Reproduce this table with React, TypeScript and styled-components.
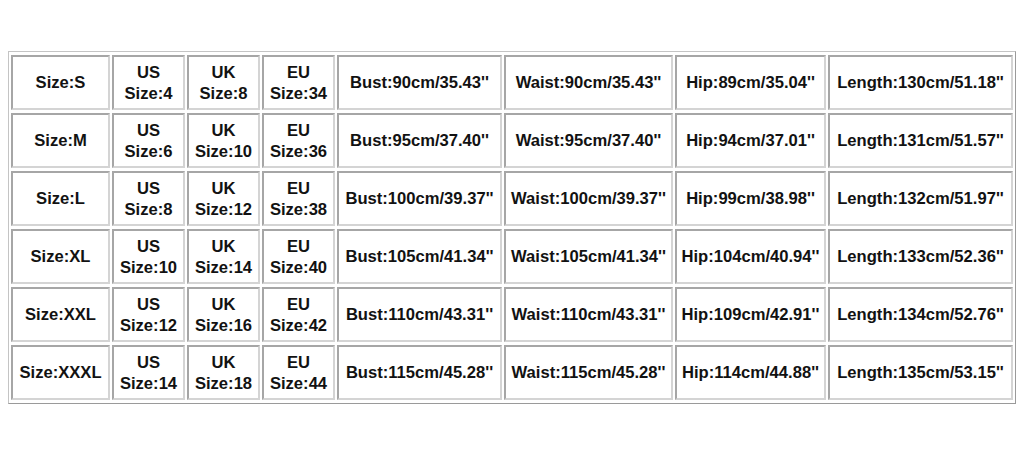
import React from 'react'
import styled, { createGlobalStyle } from 'styled-components'

const GlobalStyle = createGlobalStyle`
  html, body {
    margin: 0;
    padding: 0;
    background: #ffffff;
  }
  body {
    font-family: "Liberation Sans", Arial, sans-serif;
  }
`

const Page = styled.div`
  padding: 51px 8px 0 8px;
  width: 1024px;
  height: 450px;
  box-sizing: border-box;
`

const SizeTable = styled.table`
  width: 1008px;
  border: 1px solid #c4c4c4;
  border-right-color: #9a9a9a;
  border-bottom-color: #9a9a9a;
  border-spacing: 2px 3px;
  table-layout: fixed;
`

const Cell = styled.td<{ $w: number }>`
  width: ${({ $w }) => $w}px;
  height: 55px;
  box-sizing: border-box;
  padding: 0;
  border: 2px solid #a6a6a6;
  border-right-color: #d4d4d4;
  border-bottom-color: #d4d4d4;
  text-align: center;
  vertical-align: middle;
  font-size: 16.6px;
  font-weight: bold;
  line-height: 21px;
  color: #121212;
  white-space: nowrap;
`

const widths = [99, 73, 73, 73, 165, 169, 151, 185]

const rows = [
  ['S', '4', '8', '34', '90cm/35.43', '90cm/35.43', '89cm/35.04', '130cm/51.18'],
  ['M', '6', '10', '36', '95cm/37.40', '95cm/37.40', '94cm/37.01', '131cm/51.57'],
  ['L', '8', '12', '38', '100cm/39.37', '100cm/39.37', '99cm/38.98', '132cm/51.97'],
  ['XL', '10', '14', '40', '105cm/41.34', '105cm/41.34', '104cm/40.94', '133cm/52.36'],
  ['XXL', '12', '16', '42', '110cm/43.31', '110cm/43.31', '109cm/42.91', '134cm/52.76'],
  ['XXXL', '14', '18', '44', '115cm/45.28', '115cm/45.28', '114cm/44.88', '135cm/53.15'],
]

const regions = ['US', 'UK', 'EU']
const measures = ['Bust', 'Waist', 'Hip', 'Length']

export default function App() {
  return (
    <>
      <GlobalStyle />
      <Page>
        <SizeTable>
          <tbody>
            {rows.map((r) => (
              <tr key={r[0]}>
                <Cell $w={widths[0]}>Size:{r[0]}</Cell>
                {regions.map((reg, i) => (
                  <Cell key={reg} $w={widths[i + 1]}>
                    {reg}
                    <br />
                    Size:{r[i + 1]}
                  </Cell>
                ))}
                {measures.map((m, i) => (
                  <Cell key={m} $w={widths[i + 4]}>
                    {m}:{r[i + 4]}''
                  </Cell>
                ))}
              </tr>
            ))}
          </tbody>
        </SizeTable>
      </Page>
    </>
  )
}
